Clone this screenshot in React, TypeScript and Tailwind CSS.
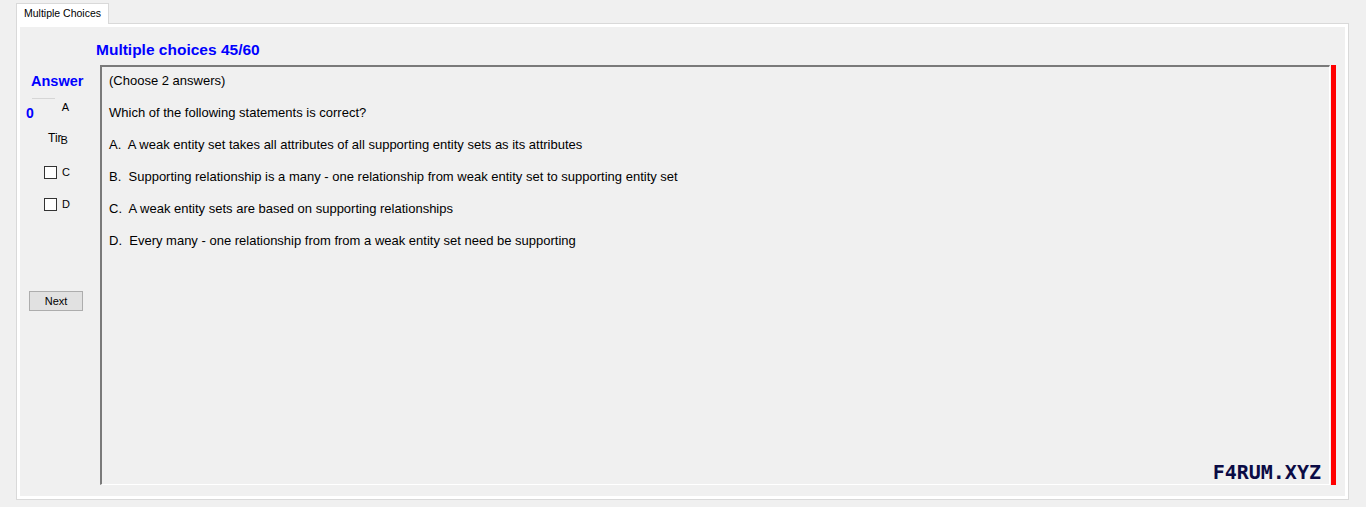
const options = [
  { key: "A", text: "A weak entity set takes all attributes of all supporting entity sets as its attributes" },
  { key: "B", text: "Supporting relationship is a many - one relationship from weak entity set to supporting entity set" },
  { key: "C", text: "A weak entity sets are based on supporting relationships" },
  { key: "D", text: "Every many - one relationship from from a weak entity set need be supporting" },
];

function Check({ label, className }: { label: string; className: string }) {
  return (
    <div className={`flex items-center pl-[24px] ${className}`}>
      <span className="h-[13px] w-[13px] border border-[#333333] bg-white" />
      <span className="ml-[5px] text-[11px] leading-[13px]">{label}</span>
    </div>
  );
}

export default function App() {
  return (
    <div className="h-[507px] w-[1366px] overflow-hidden bg-[#f0f0f0] pl-[16px] pr-[17px] pt-[3px] font-['Liberation_Sans',Arial,sans-serif] text-black">
      {/* tab header */}
      <div className="relative z-10 -mb-px flex h-[21px] w-[93px] items-center border border-b-0 border-[#d9d9d9] bg-white pl-[7px] text-[10.5px]">
        Multiple Choices
      </div>

      {/* tab page */}
      <div className="flex h-[477px] flex-col border border-[#d9d9d9]">
        <div className="flex flex-1 flex-col border-[3px] border-white pb-[11px] pr-[9px]">
          <div className="pl-[76px] pt-[15px] text-[15.5px] font-bold leading-[16px] text-[#0000ff]">
            Multiple choices 45/60
          </div>

          <div className="mt-[7px] flex flex-1">
            {/* left answer column */}
            <div className="flex w-[80px] flex-col">
              <div className="mt-[8px] pl-[11px] text-[14.5px] font-bold leading-[16px] text-[#0000ff]">Answer</div>
              <div className="ml-[12px] mt-[9px] h-px w-[23px] bg-[#d6d6d6]" />
              <div className="flex items-start">
                <span className="ml-[6px] mt-[6px] text-[14px] font-bold leading-[16px] text-[#0000ff]">0</span>
                <span className="ml-[28px] mt-[2px] text-[11px] leading-[13px]">A</span>
              </div>
              <div className="mt-[10px] flex items-start pl-[28px] text-[12px] leading-[14px]">
                <span>Tir</span>
                <span className="-ml-[1px] mt-[2px] text-[11px]">B</span>
              </div>
              <Check label="C" className="mt-[19px]" />
              <Check label="D" className="mt-[19px]" />
              <button className="ml-[9px] mt-[80px] flex h-[20px] w-[54px] items-center justify-center border border-[#adadad] bg-[#e1e1e1] text-[11px]">
                Next
              </button>
            </div>

            {/* question box */}
            <div className="relative flex-1 border-l-2 border-t-2 border-b border-r border-l-[#7a7a7a] border-t-[#7a7a7a] border-b-white border-r-white">
              <div className="flex flex-col gap-[18px] pl-[7px] pt-[7px] text-[13px] leading-[14px]">
                <div>(Choose 2 answers)</div>
                <div>Which of the following statements is correct?</div>
                {options.map((o) => (
                  <div key={o.key}>
                    {o.key}.&nbsp; {o.text}
                  </div>
                ))}
              </div>
              <div className="absolute bottom-0 right-[8px] font-['DejaVu_Sans_Mono',monospace] text-[20px] font-bold leading-[24px] text-[#0b0b45]">
                F4RUM.XYZ
              </div>
            </div>
            <div className="ml-px w-[5px] bg-[#ff0000]" />
          </div>
        </div>
      </div>
    </div>
  );
}
